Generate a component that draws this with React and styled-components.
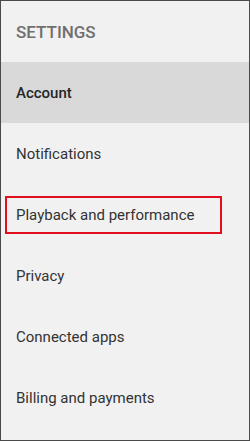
import React from 'react';
import styled, { createGlobalStyle } from 'styled-components';

const GlobalStyle = createGlobalStyle`
  * { box-sizing: border-box; }
  body {
    margin: 0;
    font-family: Roboto, "Liberation Sans", Arial, sans-serif;
    background: #f1f1f1;
  }
`;

const items = [
  { label: 'Account', active: true },
  { label: 'Notifications' },
  { label: 'Playback and performance', marked: true },
  { label: 'Privacy' },
  { label: 'Connected apps' },
  { label: 'Billing and payments' },
];

export default function App() {
  return (
    <>
      <GlobalStyle />
      <Panel>
        <Heading>SETTINGS</Heading>
        <Menu>
          {items.map(item => (
            <Row key={item.label} $active={item.active}>
              {item.marked ? (
                <Marked>{item.label}</Marked>
              ) : (
                <Label $active={item.active}>{item.label}</Label>
              )}
            </Row>
          ))}
        </Menu>
      </Panel>
    </>
  );
}

const Panel = styled.div`
  width: 250px;
  height: 441px;
  border: 1px solid #4a4a4a;
  background: #f1f1f1;
  display: flex;
  flex-direction: column;
`;

const Heading = styled.div`
  height: 61px;
  display: flex;
  align-items: center;
  padding-left: 15px;
  font-size: 17px;
  font-weight: 500;
  color: #6f6f6f;
`;

const Menu = styled.div`
  display: flex;
  flex-direction: column;
`;

const Row = styled.div`
  height: 61px;
  display: flex;
  align-items: center;
  padding-left: 4px;
  background: ${p => (p.$active ? '#d9d9d9' : 'transparent')};
`;

const Label = styled.span`
  padding-left: 11px;
  font-size: 15px;
  font-weight: ${p => (p.$active ? 500 : 400)};
  color: ${p => (p.$active ? '#262626' : '#333')};
`;

const Marked = styled.span`
  width: 217px;
  height: 38px;
  display: flex;
  align-items: center;
  padding-left: 9px;
  border: 2px solid #e1101c;
  font-size: 15px;
  color: #333;
`;
